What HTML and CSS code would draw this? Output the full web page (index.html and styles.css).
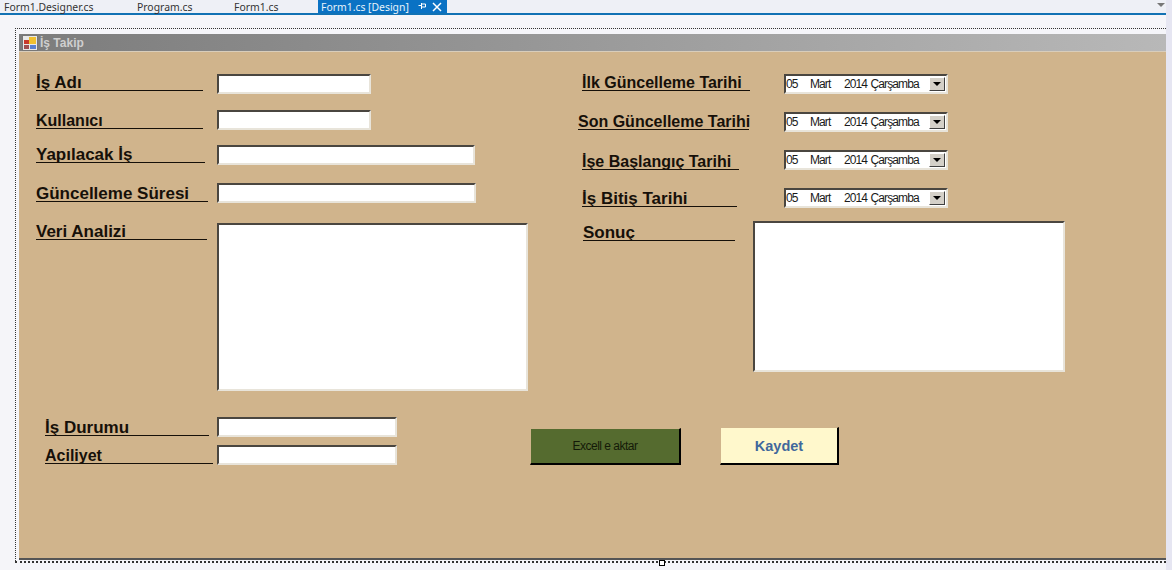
FILE: index.html
```html
<!DOCTYPE html>
<html lang="tr">
<head>
<meta charset="utf-8">
<title>Form1.cs [Design]</title>
<link rel="stylesheet" href="styles.css">
</head>
<body>
<div class="tabstrip">
  <span class="tab tab-designer">Form1.Designer.cs</span>
  <span class="tab tab-program">Program.cs</span>
  <span class="tab tab-form">Form1.cs</span>
  <span class="tab tab-active">
    <span class="tab-title">Form1.cs [Design]</span>
    <svg class="tab-icon" width="9" height="9" viewBox="0 0 9 9"><path d="M3.500 1v6M3.500 2h4v3h-4M0.500 3.500h3" fill="none" stroke="#fff"/></svg>
    <svg class="tab-icon" width="10" height="10" viewBox="0 0 10 10"><path d="M1 1l8 8M9 1l-8 8" fill="none" stroke="#fff" stroke-width="1.500"/></svg>
  </span>
  <span class="tab-menu"></span>
</div>
<div class="designer">
  <div class="selection">
    <div class="form">
      <div class="titlebar">
        <svg class="form-icon" width="16" height="16" viewBox="0 0 16 16">
          <rect x="0.500" y="0.500" width="15" height="15" fill="#e8e8e8" stroke="#777"/>
          <rect x="2" y="5" width="5" height="4" fill="#c83a2c"/>
          <rect x="7" y="2" width="7" height="7" fill="#f0c030"/>
          <rect x="2" y="10" width="5" height="4" fill="#a05050"/>
          <rect x="8" y="10" width="6" height="4" fill="#5a80d0"/>
        </svg>
        <span>İş Takip</span>
      </div>
      <div class="canvas">
        <label class="lbl l-ad">İş Adı</label>
        <input class="box f-ad" type="text">
        <label class="lbl lbl-small l-kul">Kullanıcı</label>
        <input class="box f-kul" type="text">
        <label class="lbl l-yap">Yapılacak İş</label>
        <input class="box f-yap" type="text">
        <label class="lbl l-gun">Güncelleme Süresi</label>
        <input class="box f-gun" type="text">
        <label class="lbl l-ver">Veri Analizi</label>
        <textarea class="box f-ver"></textarea>
        <label class="lbl l-dur">İş Durumu</label>
        <input class="box f-dur" type="text">
        <label class="lbl lbl-small l-aci">Aciliyet</label>
        <input class="box f-aci" type="text">

        <label class="lbl lbl-small l-ilk">İlk Güncelleme Tarihi</label>
        <div class="box date d-1"><span class="d-day">05</span><span class="d-mon">Mart</span><span>2014 Çarşamba</span><i class="drop"></i></div>
        <label class="lbl lbl-small l-son">Son Güncelleme Tarihi</label>
        <div class="box date d-2"><span class="d-day">05</span><span class="d-mon">Mart</span><span>2014 Çarşamba</span><i class="drop"></i></div>
        <label class="lbl lbl-small l-bas">İşe Başlangıç Tarihi</label>
        <div class="box date d-3"><span class="d-day">05</span><span class="d-mon">Mart</span><span>2014 Çarşamba</span><i class="drop"></i></div>
        <label class="lbl l-bit">İş Bitiş Tarihi</label>
        <div class="box date d-4"><span class="d-day">05</span><span class="d-mon">Mart</span><span>2014 Çarşamba</span><i class="drop"></i></div>
        <label class="lbl l-snc">Sonuç</label>
        <textarea class="box f-snc"></textarea>

        <button class="btn btn-excel">Excell e aktar</button>
        <button class="btn btn-save">Kaydet</button>
      </div>
    </div>
    <span class="handle"></span>
  </div>
</div>
</body>
</html>
```
FILE: styles.css
```css
html, body { margin: 0; padding: 0; }
body {
  width: 1172px;
  height: 570px;
  overflow: hidden;
  background: #e6e6f2;
  font-family: "Liberation Sans", Arial, sans-serif;
}
.tabstrip {
  position: relative;
  display: flex;
  height: 13px;
  width: 1166px;
  background: #eef0f6;
  border-bottom: 2px solid #1272b4;
  font-family: "Noto Sans", sans-serif;
  font-size: 10.4px;
  line-height: 12px;
  color: #333;
}
.tab { display: flex; align-items: center; white-space: nowrap; }
.tab-designer { margin-left: 4px; width: 133px; }
.tab-program { width: 97px; }
.tab-form { width: 84px; }
.tab-active {
  width: 129px;
  padding-left: 3px;
  box-sizing: border-box;
  background: #0a72c4;
  color: #e8f2fa;
  gap: 5px;
}
.tab-title { width: 92px; }
.tab-menu {
  position: absolute;
  right: 1px;
  top: 3px;
  border: 4px solid transparent;
  border-top: 4px solid #777;
}
.designer {
  width: 1151px;
  height: 555px;
  padding: 13px 0 0 15px;
  background: #f5f5f9;
}
.selection {
  position: relative;
  box-sizing: border-box;
  width: 1151px;
  height: 535px;
  padding: 5px 0 0 3px;
  border-top: 1px dotted #333;
  border-left: 1px dotted #333;
  border-bottom: 2px dotted #333;
}
.form {
  height: 526px;
  background: #d0b48c;
  border-bottom: 2px solid #555;
  box-sizing: border-box;
}
.titlebar {
  display: flex;
  align-items: center;
  gap: 2px;
  height: 18px;
  padding-left: 3px;
  box-sizing: border-box;
  background: linear-gradient(90deg, #7c7c7c, #b8b8b8);
  border-bottom: 1px solid #d8cdbb;
  color: #cfcfcf;
  font-size: 12px;
  font-weight: bold;
}
.canvas {
  position: relative;
  height: 506px;
}
.lbl {
  position: absolute;
  box-sizing: border-box;
  height: 20px;
  line-height: 23px;
  font-size: 17px;
  font-weight: bold;
  white-space: nowrap;
  color: #161009;
  border-bottom: 1px solid #161009;
}
.lbl-small { font-size: 16px; }
.box {
  position: absolute;
  box-sizing: border-box;
  margin: 0;
  padding: 0;
  background: #fff;
  border-style: solid;
  border-width: 2px;
  border-color: #4a4640 #e8e4da #e8e4da #4a4640;
  resize: none;
  outline: none;
  display: block;
}
.l-ad  { left: 17px; top: 19px; width: 167px; }
.l-kul { left: 17px; top: 57px; width: 167px; }
.l-yap { left: 17px; top: 91px; width: 169px; }
.l-gun { left: 17px; top: 130px; width: 172px; }
.l-ver { left: 17px; top: 168px; width: 171px; }
.l-dur { left: 26px; top: 364px; width: 164px; }
.l-aci { left: 26px; top: 392px; width: 168px; }
.l-ilk { left: 563px; top: 19px; width: 168px; }
.l-son { left: 559px; top: 58px; width: 171px; }
.l-bas { left: 563px; top: 98px; width: 157px; }
.l-bit { left: 563px; top: 135px; width: 155px; }
.l-snc { left: 564px; top: 169px; width: 152px; }

.f-ad  { left: 198px; top: 22px; width: 154px; height: 20px; }
.f-kul { left: 198px; top: 58px; width: 154px; height: 20px; }
.f-yap { left: 198px; top: 93px; width: 258px; height: 20px; }
.f-gun { left: 198px; top: 131px; width: 259px; height: 20px; }
.f-ver { left: 198px; top: 171px; width: 311px; height: 168px; }
.f-dur { left: 198px; top: 365px; width: 180px; height: 20px; }
.f-aci { left: 198px; top: 393px; width: 180px; height: 20px; }
.f-snc { left: 734px; top: 169px; width: 312px; height: 151px; }

.date {
  left: 765px;
  width: 164px;
  height: 20px;
  display: flex;
  align-items: center;
  font-size: 12px;
  letter-spacing: -0.9px;
  word-spacing: 1px;
  color: #1a1a1a;
  white-space: nowrap;
}
.d-day { width: 24px; }
.d-mon { width: 34px; }
.d-1 { top: 22px; }
.d-2 { top: 60px; }
.d-3 { top: 98px; }
.d-4 { top: 136px; }
.drop {
  position: absolute;
  right: 1px;
  top: 1px;
  width: 16px;
  height: 14px;
  box-sizing: border-box;
  background: #d4d0c8;
  border: 1px solid;
  border-color: #fff #404040 #404040 #fff;
}
.drop::after {
  content: "";
  position: absolute;
  left: 3px;
  top: 4px;
  border: 4px solid transparent;
  border-top: 4px solid #000;
  border-bottom: 0;
}
.btn {
  position: absolute;
  box-sizing: border-box;
  padding: 0;
  margin: 0;
  border-style: solid;
  border-width: 1px 2px 2px 1px;
  border-color: #d0b48c #000 #000 #d0b48c;
}
.btn-excel {
  left: 511px;
  top: 376px;
  width: 151px;
  height: 37px;
  background: #556b2f;
  color: #141a08;
  font-size: 12px;
  letter-spacing: -0.5px;
  font-family: "Liberation Sans", sans-serif;
}
.btn-save {
  left: 701px;
  top: 375px;
  width: 119px;
  height: 38px;
  background: #fff8cc;
  color: #41689c;
  font-size: 14.5px;
  font-weight: bold;
  font-family: "Liberation Sans", sans-serif;
}
.handle {
  position: absolute;
  left: 643px;
  bottom: -5px;
  width: 6px;
  height: 6px;
  box-sizing: border-box;
  background: #fff;
  border: 1px solid #000;
}
```
